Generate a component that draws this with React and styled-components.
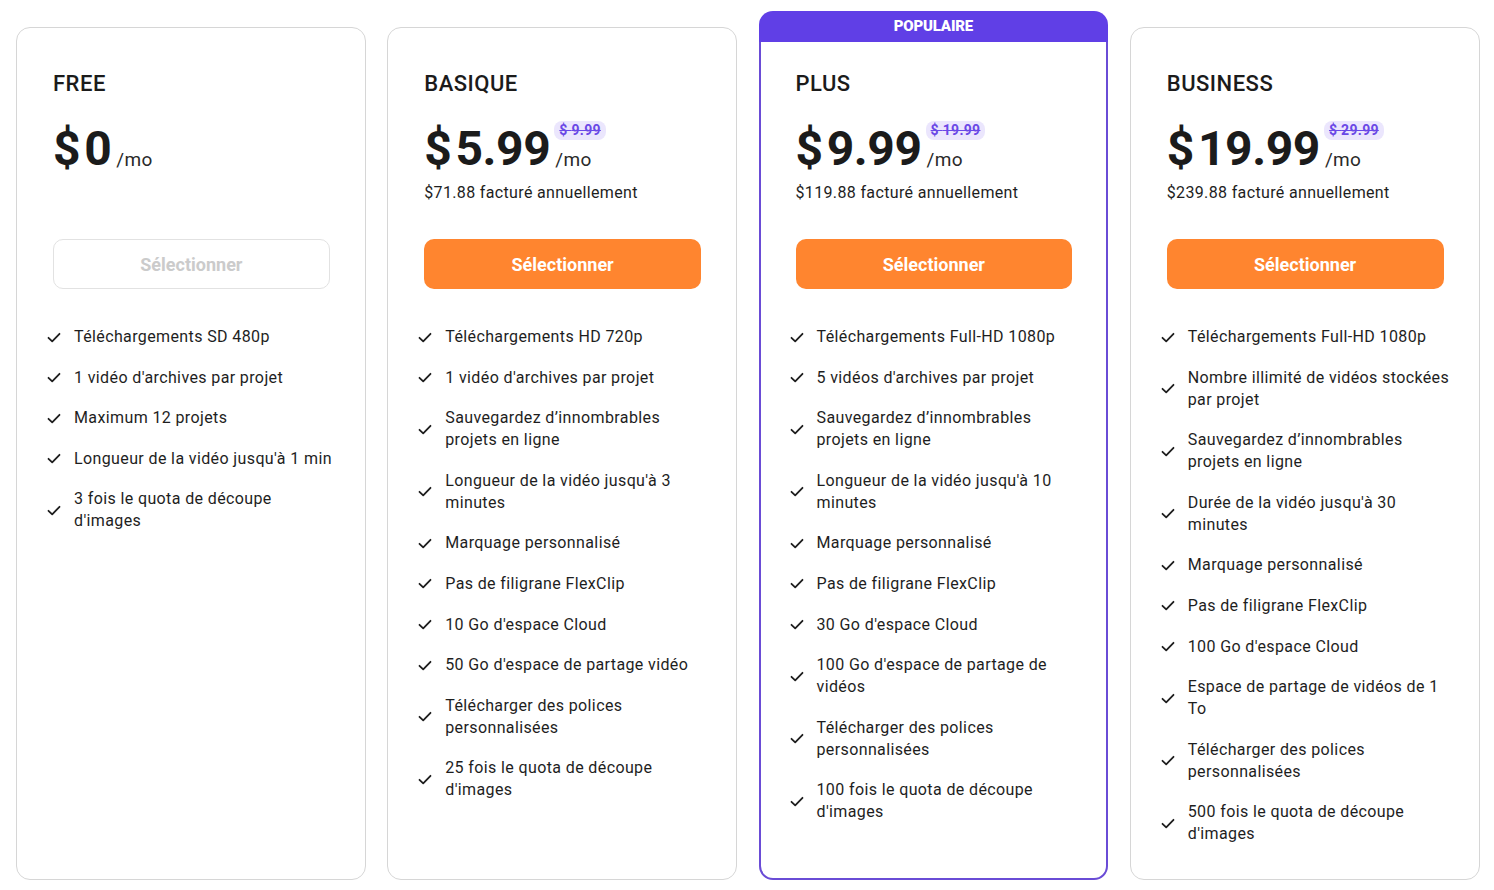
import styled, { createGlobalStyle } from "styled-components";

const GlobalStyle = createGlobalStyle`
  body {
    margin: 0;
    background: #fff;
    font-family: Roboto, "Liberation Sans", sans-serif;
    color: #1b1b1b;
  }
`;

const plans = [
  {
    name: "FREE",
    price: "0",
    free: true,
    features: [
      "Téléchargements SD 480p",
      "1 vidéo d'archives par projet",
      "Maximum 12 projets",
      "Longueur de la vidéo jusqu'à 1 min",
      "3 fois le quota de découpe d'images",
    ],
  },
  {
    name: "BASIQUE",
    price: "5.99",
    old: "9.99",
    billed: "$71.88 facturé annuellement",
    features: [
      "Téléchargements HD 720p",
      "1 vidéo d'archives par projet",
      "Sauvegardez d’innombrables projets en ligne",
      "Longueur de la vidéo jusqu'à 3 minutes",
      "Marquage personnalisé",
      "Pas de filigrane FlexClip",
      "10 Go d'espace Cloud",
      "50 Go d'espace de partage vidéo",
      "Télécharger des polices personnalisées",
      "25 fois le quota de découpe d'images",
    ],
  },
  {
    name: "PLUS",
    price: "9.99",
    old: "19.99",
    popular: true,
    billed: "$119.88 facturé annuellement",
    features: [
      "Téléchargements Full-HD 1080p",
      "5 vidéos d'archives par projet",
      "Sauvegardez d’innombrables projets en ligne",
      "Longueur de la vidéo jusqu'à 10 minutes",
      "Marquage personnalisé",
      "Pas de filigrane FlexClip",
      "30 Go d'espace Cloud",
      "100 Go d'espace de partage de vidéos",
      "Télécharger des polices personnalisées",
      "100 fois le quota de découpe d'images",
    ],
  },
  {
    name: "BUSINESS",
    price: "19.99",
    old: "29.99",
    billed: "$239.88 facturé annuellement",
    features: [
      "Téléchargements Full-HD 1080p",
      "Nombre illimité de vidéos stockées par projet",
      "Sauvegardez d’innombrables projets en ligne",
      "Durée de la vidéo jusqu'à 30 minutes",
      "Marquage personnalisé",
      "Pas de filigrane FlexClip",
      "100 Go d'espace Cloud",
      "Espace de partage de vidéos de 1 To",
      "Télécharger des polices personnalisées",
      "500 fois le quota de découpe d'images",
    ],
  },
];

const Check = () => (
  <svg width="14" height="11" viewBox="0 0 14 11" fill="none">
    <path d="M1.5 5.8 L5.2 9.3 L12.5 1.8" stroke="#1e1e1e" strokeWidth="1.8" strokeLinecap="round" strokeLinejoin="round" />
  </svg>
);

export default function App() {
  return (
    <>
      <GlobalStyle />
      <Row>
        {plans.map((p) => (
          <Card key={p.name} $popular={p.popular}>
            {p.popular && <Badge>POPULAIRE</Badge>}
            <Title>{p.name}</Title>
            <PriceRow>
              <Amount>
                <Dollar>$</Dollar>
                {p.price}
              </Amount>
              <Side>
                {p.old ? <OldPrice>$ {p.old}</OldPrice> : null}
                <PerMonth>/mo</PerMonth>
              </Side>
            </PriceRow>
            <Billed>{p.billed || ""}</Billed>
            <SelectButton $free={p.free}>Sélectionner</SelectButton>
            <Features>
              {p.features.map((f, i) => (
                <Feature key={i}>
                  <Check />
                  <span>{f}</span>
                </Feature>
              ))}
            </Features>
          </Card>
        ))}
      </Row>
    </>
  );
}

const Row = styled.div`
  display: flex;
  gap: 21.5px;
  height: 890px;
  box-sizing: border-box;
  padding: 27px 14.5px 10px 16px;
`;

const Card = styled.div`
  position: relative;
  flex: 1;
  box-sizing: border-box;
  border: ${(p) => (p.$popular ? "2px solid #6a4cd6" : "1px solid #d6d6d6")};
  border-radius: 14px;
  padding: ${(p) => (p.$popular ? "42px 34px 0 35px" : "43px 35px 0 36px")};
  background: #fff;
`;

const Badge = styled.div`
  position: absolute;
  top: -18px;
  left: -2px;
  right: -2px;
  height: 31px;
  padding-bottom: 2px;
  box-sizing: border-box;
  background: #603fe6;
  border-radius: 14px 14px 0 0;
  color: #fff;
  font-size: 15px;
  font-weight: 900;
  display: flex;
  align-items: center;
  justify-content: center;
  letter-spacing: -0.2px;
`;

const Title = styled.div`
  font-size: 22px;
  font-weight: 500;
  line-height: 26px;
  letter-spacing: 0.5px;
  color: #1b1b1b;
`;

const PriceRow = styled.div`
  display: flex;
  align-items: flex-end;
  gap: 5px;
  margin-top: 26px;
  height: 50px;
`;

const Amount = styled.div`
  font-size: 48px;
  font-weight: 700;
  line-height: 48px;
  letter-spacing: -0.4px;
  color: #1b1b1b;
`;

const Dollar = styled.span`
  margin-right: 4px;
`;

const Side = styled.div`
  display: flex;
  flex-direction: column;
  align-items: flex-start;
  gap: 10px;
  padding-bottom: 3px;
`;

const OldPrice = styled.span`
  background: #ebe6fd;
  color: #6a48e6;
  font-size: 14px;
  font-weight: 700;
  line-height: 19px;
  padding: 0 5px;
  border-radius: 8px;
  letter-spacing: 0.3px;
  text-decoration: line-through;
  margin-left: -1px;
`;

const PerMonth = styled.span`
  font-size: 19px;
  line-height: 20px;
  letter-spacing: 0.3px;
  color: #2a2a2a;
`;

const Billed = styled.div`
  font-size: 16px;
  line-height: 22px;
  height: 22px;
  margin-top: 9px;
  letter-spacing: 0.35px;
  color: #1e1e1e;
`;

const SelectButton = styled.button`
  display: block;
  width: 100%;
  height: 50px;
  margin-top: 35px;
  border-radius: 10px;
  font-family: Roboto, "Liberation Sans", sans-serif;
  font-size: 18px;
  font-weight: 700;
  cursor: pointer;
  border: ${(p) => (p.$free ? "1px solid #e2e2e2" : "none")};
  background: ${(p) => (p.$free ? "#fff" : "#ff852f")};
  color: ${(p) => (p.$free ? "#cbcbcb" : "#fff")};
`;

const Features = styled.ul`
  list-style: none;
  margin: 37px -8px 0 -6px;
  padding: 0;
  display: flex;
  flex-direction: column;
  gap: 18.6px;
`;

const Feature = styled.li`
  display: grid;
  grid-template-columns: 14px 1fr;
  column-gap: 13px;
  align-items: center;
  font-size: 16px;
  line-height: 22px;
  letter-spacing: 0.38px;
  color: #1e1e1e;
`;
